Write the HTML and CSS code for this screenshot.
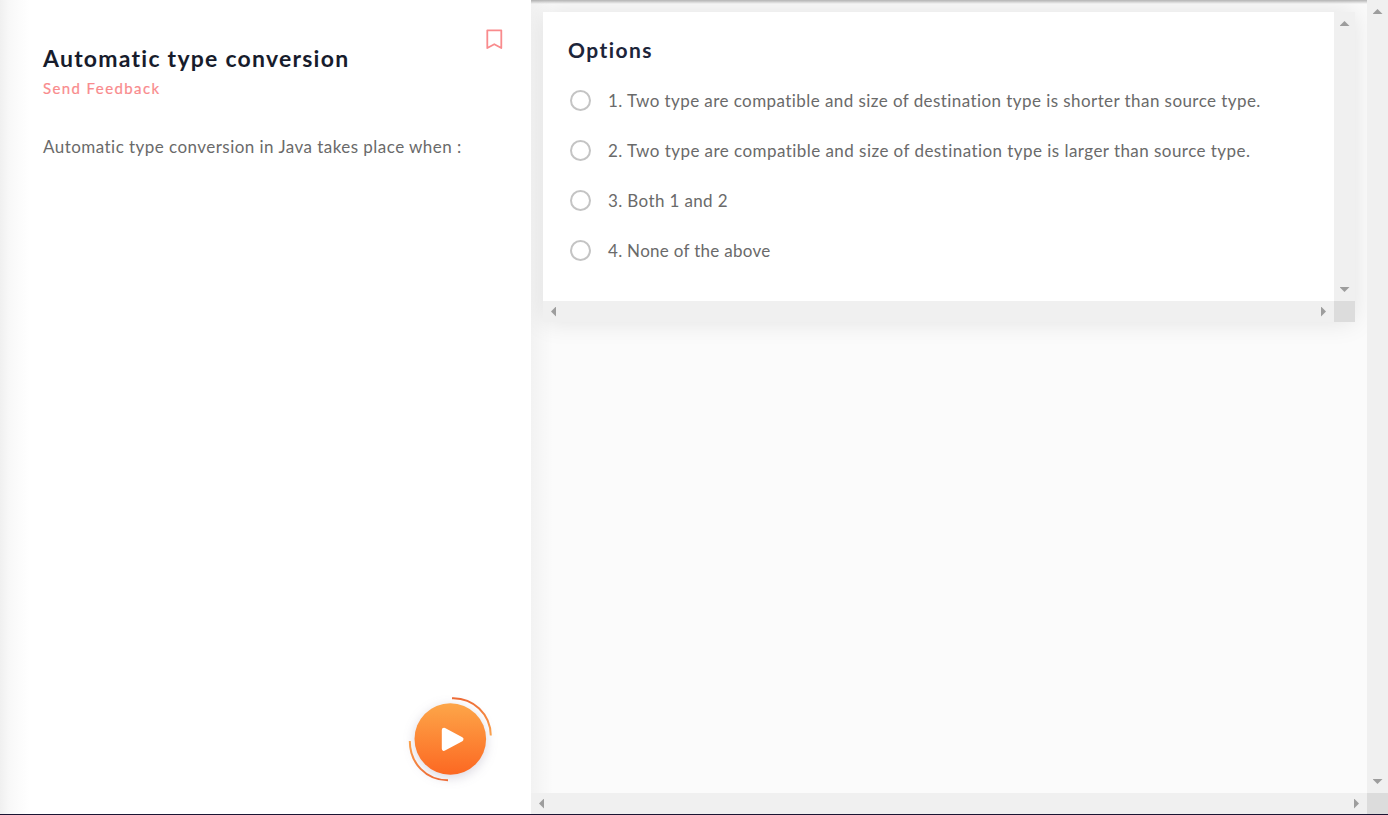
FILE: index.html
```html
<!DOCTYPE html>
<html lang="en">
<head>
<meta charset="utf-8">
<title>Automatic type conversion</title>
<link rel="stylesheet" href="styles.css">
</head>
<body>
<div class="app">
  <section class="problem">
    <header class="problem-head">
      <div>
        <h1 class="title">Automatic type conversion</h1>
        <a class="feedback">Send Feedback</a>
      </div>
      <svg class="bookmark" width="18" height="22" viewBox="0 0 18 22"><path d="M2.3 2.3H16.3V20L9.3 16.2L2.3 20Z" fill="none" stroke="#f98b8d" stroke-width="1.8" stroke-linejoin="round"/></svg>
    </header>
    <p class="question">Automatic type conversion in Java takes place when :</p>
    <button class="play" aria-label="Play">
      <svg width="100" height="100" viewBox="0 0 100 100">
        <defs>
          <linearGradient id="disc" x1="0" y1="0" x2="0" y2="1"><stop offset="0" stop-color="#fda649"/><stop offset="1" stop-color="#fc6822"/></linearGradient>
          <linearGradient id="arcTop" x1="0" y1="0" x2="0" y2="1"><stop offset="0" stop-color="#ed6b36"/><stop offset="1" stop-color="#fba34d"/></linearGradient>
          <linearGradient id="arcBottom" x1="0" y1="0" x2="0" y2="1"><stop offset="0" stop-color="#fba34d"/><stop offset="1" stop-color="#ed6b36"/></linearGradient>
        </defs>
        <circle class="disc" cx="50.3" cy="49" r="35.8" fill="url(#disc)"/>
        <path d="M52 8.2C73 7.5 90.5 24 90.8 45.5" fill="none" stroke="url(#arcTop)" stroke-width="2"/>
        <path d="M9.8 51C9.8 73 26 90.3 48 90.3" fill="none" stroke="url(#arcBottom)" stroke-width="2"/>
        <path d="M44 40L61.3 49.3L44 58.6Z" fill="#fff" stroke="#fff" stroke-width="4.4" stroke-linejoin="round"/>
      </svg>
    </button>
  </section>
  <main class="pane">
    <div class="view">
      <div class="card">
        <div class="options">
          <h2 class="options-title">Options</h2>
          <label class="option"><i class="radio"></i><span class="o1">1. Two type are compatible and size of destination type is shorter than source type.</span></label>
          <label class="option"><i class="radio"></i><span class="o2">2. Two type are compatible and size of destination type is larger than source type.</span></label>
          <label class="option"><i class="radio"></i><span class="o3">3. Both 1 and 2</span></label>
          <label class="option"><i class="radio"></i><span class="o4">4. None of the above</span></label>
        </div>
        <div class="vbar"><i class="up"></i><i class="down"></i></div>
        <div class="hbar"><i class="left"></i><i class="right"></i></div>
        <div class="corner"></div>
      </div>
    </div>
    <div class="vbar outer"><i class="up"></i><i class="down"></i></div>
    <div class="hbar"><i class="left"></i><i class="right"></i></div>
    <div class="corner"></div>
  </main>
</div>
</body>
</html>
```
FILE: styles.css
```css
* { box-sizing: border-box; }
body { margin: 0; font-family: Lato, "Open Sans", sans-serif; color: #6a6a6a; background: #fff; }
.app { display: grid; grid-template-columns: 531px 857px; height: 815px; border-bottom: 1px solid #1b1533; overflow: hidden; }
.problem { display: flex; flex-direction: column; padding: 28px 28px 24px 43px; background: linear-gradient(90deg, #f0f0f0 0, #f8f8f8 9px, #fcfcfc 20px, #fff 30px); }
.problem-head { display: flex; justify-content: space-between; height: 106px; }
.title { margin: 16px 0 0; font-size: 23px; line-height: 28px; letter-spacing: 1.24px; color: #171c2c; white-space: nowrap; }
.feedback { display: block; margin-top: 6px; font-size: 15px; line-height: 20px; letter-spacing: 1.4px; color: #f98b8d; -webkit-text-stroke: .2px #f98b8d; }
.bookmark { display: block; }
.question { margin: 0; font-size: 17px; line-height: 26px; letter-spacing: .46px; white-space: nowrap; }
.play { align-self: flex-end; width: 100px; height: 100px; margin: auto 3px 0 0; padding: 0; border: 0; background: none; }
.play svg { display: block; overflow: visible; }
.disc { filter: drop-shadow(0 3px 6px rgba(80, 70, 110, .22)); }
.pane { display: grid; grid-template: 793px 21px / 836px 21px; min-width: 0; }
.view { padding: 12px; background: linear-gradient(rgba(0, 0, 0, .28), rgba(0, 0, 0, 0) 4px), linear-gradient(90deg, rgba(0, 0, 0, .035), rgba(0, 0, 0, 0) 22px), #fbfbfb; overflow: hidden; }
.card { display: grid; grid-template: 289px 21px / 791px 21px; width: 812px; box-shadow: 0 0 24px rgba(0, 0, 0, .1); }
.options { padding: 25px 25px 0; background: #fff; }
.options-title { margin: 0 0 12px; font-size: 21px; line-height: 26px; letter-spacing: 1.45px; color: #1d253a; }
.option { display: flex; align-items: center; gap: 17px; height: 50px; padding-left: 2px; font-size: 17px; white-space: nowrap; }
.o1 { letter-spacing: .43px; }
.o2 { letter-spacing: .45px; }
.o3 { letter-spacing: .37px; }
.o4 { letter-spacing: .3px; }
.radio { flex: none; width: 21px; height: 21px; border: 2px solid #c4c4c4; border-radius: 50%; background: #fff; }
.vbar, .hbar { display: flex; justify-content: space-between; align-items: center; background: #f0f0f0; }
.vbar { flex-direction: column; padding: 9px 0; }
.hbar { padding: 0 8px; }
.corner { background: #dcdcdc; }
.up, .down { width: 10px; height: 5px; background: #9d9d9d; }
.up { clip-path: polygon(50% 0, 100% 100%, 0 100%); }
.down { clip-path: polygon(0 0, 100% 0, 50% 100%); }
.left, .right { width: 5px; height: 10px; background: #9d9d9d; }
.left { clip-path: polygon(100% 0, 100% 100%, 0 50%); }
.right { clip-path: polygon(0 0, 100% 50%, 0 100%); }
```
